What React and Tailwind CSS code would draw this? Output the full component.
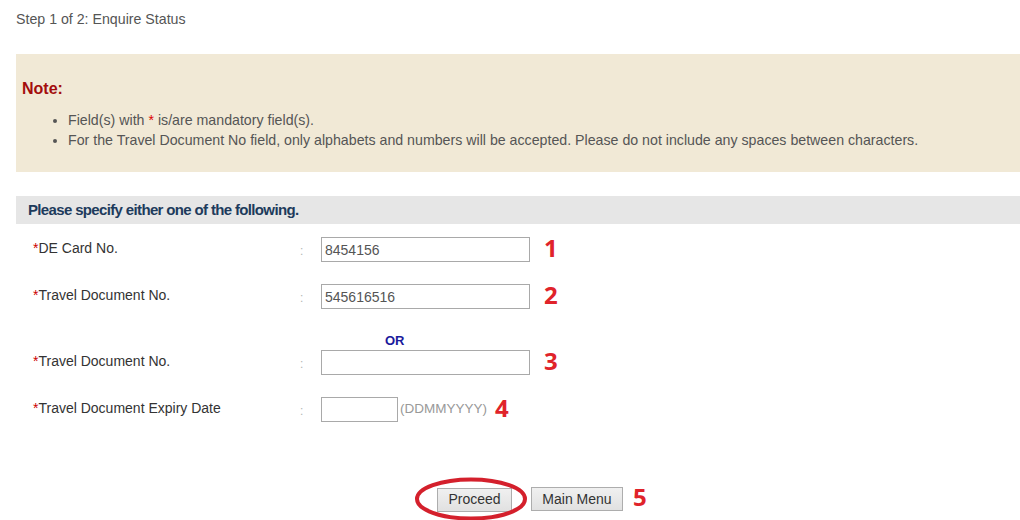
import React from "react";

const font = { fontFamily: '"Liberation Sans", Arial, sans-serif' };

function Num({ n, className = "ml-[14px]" }) {
  return (
    <span
      className={className + " relative top-[-2px] text-[24px] font-bold leading-none text-[#e0232a]"}
      style={{ fontFamily: '"Open Sans", "Liberation Sans", sans-serif' }}
    >
      {n}
    </span>
  );
}

function Row({ label, value, n, small, suffix, className = "" }) {
  return (
    <div className={"flex items-start " + className}>
      <div className="w-[267px] pt-[3px] text-[14px] leading-[16px] text-[#333]">
        <span className="text-[#c00]">*</span>
        {label}
      </div>
      <div className="w-[21px] pt-[6px] text-[12px] leading-[16px] text-[#b5b5b5]">:</div>
      <div className="flex items-center">
        <input
          readOnly
          value={value || ""}
          className={
            (small ? "w-[77px]" : "w-[209px]") +
            " h-[25px] border border-[#a9a9a9] bg-white px-[3px] text-[14px] text-[#555] outline-none"
          }
          style={font}
        />
        {suffix && <span className="ml-[2px] text-[13.5px] text-[#999]">{suffix}</span>}
        <Num n={n} className={suffix ? "ml-[8px]" : "ml-[14px]"} />
      </div>
    </div>
  );
}

export default function App() {
  return (
    <div className="h-[520px] w-[1020px] overflow-hidden bg-white" style={font}>
      <div className="pl-[16px]">
        <div className="pt-[11px] text-[14.2px] leading-[16px] text-[#555]">Step 1 of 2: Enquire Status</div>

        <div className="mt-[27px] bg-[#f1e9d6] pb-[22px] pl-[6px] pt-[25px]">
          <div className="text-[16px] font-bold leading-[20px] text-[#a30d0d]">Note:</div>
          <ul className="mt-[11px] list-disc pl-[46px] text-[14.2px] leading-[20px] text-[#555] marker:text-[#555]">
            <li>
              Field(s) with <span className="text-[#d00]">*</span> is/are mandatory field(s).
            </li>
            <li>
              For the Travel Document No field, only alphabets and numbers will be accepted. Please do not include any
              spaces between characters.
            </li>
          </ul>
        </div>

        <div className="mt-[24px] flex h-[28px] items-center bg-[#e6e6e6] pl-[12px]">
          <span className="text-[15px] font-bold tracking-[-0.65px] text-[#1d3b5c]">
            Please specify either one of the following.
          </span>
        </div>

        <div className="pl-[17px] pt-[13px]">
          <Row label="DE Card No." value="8454156" n="1" />
          <Row label="Travel Document No." value="545616516" n="2" className="mt-[22px]" />
          <div className="ml-[352px] mt-[24px] text-[13px] font-bold leading-[16px] text-[#1a1a9c]">OR</div>
          <Row label="Travel Document No." n="3" className="mt-[1px]" />
          <Row label="Travel Document Expiry Date" n="4" small suffix="(DDMMYYYY)" className="mt-[22px]" />
        </div>

        <div className="mt-[65px] flex items-center pl-[421px]">
          <div className="relative">
            <button
              className="h-[24px] w-[75px] border border-[#adadad] bg-gradient-to-b from-[#f0f0f0] to-[#e1e1e1] text-[14px] text-[#333]"
              style={font}
            >
              Proceed
            </button>
            <svg className="absolute left-[-23px] top-[-10px]" width="114" height="44" viewBox="0 0 114 44">
              <ellipse cx="57" cy="22" rx="54" ry="19.5" fill="none" stroke="#d4202c" strokeWidth="4" />
            </svg>
          </div>
          <button
            className="ml-[19px] h-[24px] w-[92px] border border-[#adadad] bg-gradient-to-b from-[#f0f0f0] to-[#e1e1e1] text-[14px] text-[#333]"
            style={font}
          >
            Main Menu
          </button>
          <Num n="5" className="ml-[10px]" />
        </div>
      </div>
    </div>
  );
}
